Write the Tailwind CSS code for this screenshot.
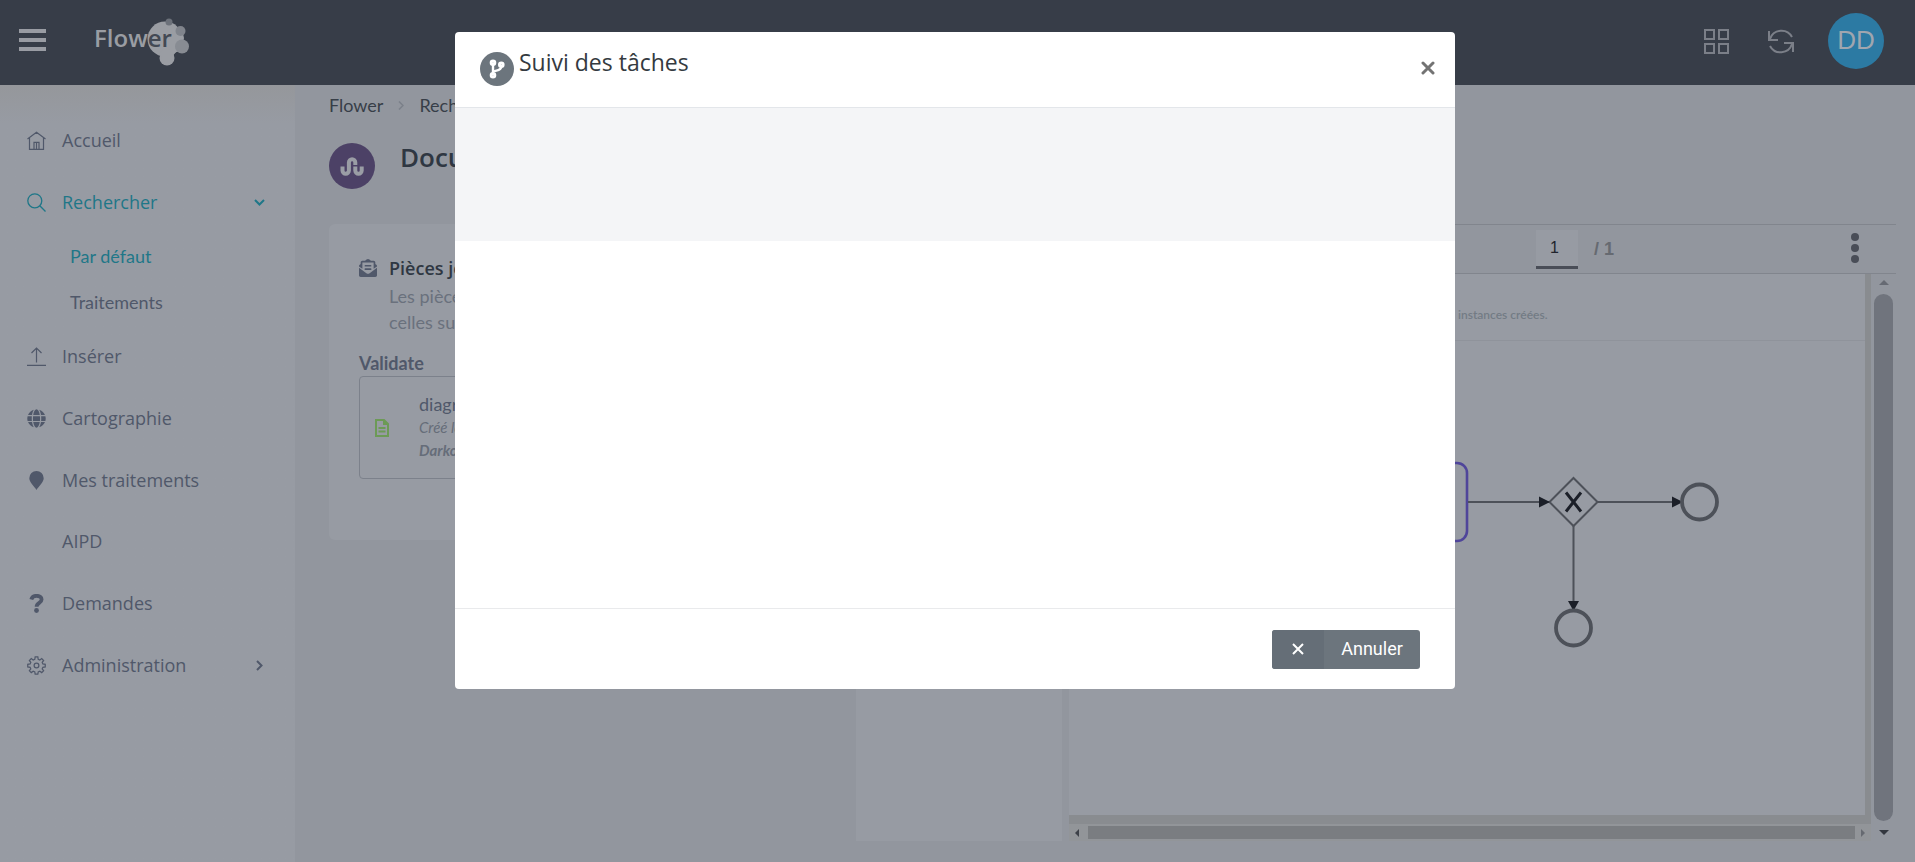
<!DOCTYPE html>
<html lang="fr">
<head>
<meta charset="utf-8">
<meta name="viewport" content="width=device-width, initial-scale=1">
<title>Flower – Suivi des tâches</title>
<script src="https://cdn.jsdelivr.net/npm/@tailwindcss/browser@4"></script>
</head>
<body class="min-h-screen flex flex-col overflow-hidden bg-[#92969e] text-[#50586a] font-['Lato','Noto_Sans',sans-serif]">

<header class="h-[85px] shrink-0 flex items-center bg-[#373d48] pl-[19px] pr-[31px] pb-[3px]">
  <button type="button" aria-label="Menu" class="w-[28px] h-[22px] -mt-[3px] flex flex-col justify-between">
    <span class="block w-[27px] h-[4px] bg-[#999ca3]"></span>
    <span class="block w-[27px] h-[4px] bg-[#999ca3]"></span>
    <span class="block w-[27px] h-[4px] bg-[#999ca3]"></span>
  </button>
  <a href="#" aria-label="Flower" class="ml-[45px]">
    <svg class="w-[100px] h-[50px]" viewBox="0 0 100 50">
      <g fill="#9a9da3">
        <circle cx="73" cy="23" r="17.500"/>
        <circle cx="82" cy="22" r="10"/>
        <circle cx="75" cy="42" r="7.500"/>
        <path d="M66 38 Q70 38 69 44 H82 Q80 38 86 34 L80 26 Z"/>
        <rect x="76" y="12" width="14" height="24" rx="5"/>
      </g>
      <circle cx="77" cy="6" r="3.500" fill="#6c717a"/>
      <circle cx="88.500" cy="15" r="5" fill="#80848c"/>
      <circle cx="90" cy="30.500" r="7" fill="#888c93"/>
      <text x="2" y="31" font-family="Open Sans, sans-serif" font-size="24" font-weight="600" fill="#9a9da3">Flow<tspan fill="#434954">er</tspan></text>
    </svg>
  </a>
  <div class="ml-auto flex items-center">
    <button type="button" aria-label="Applications" class="mr-[37px]">
      <svg class="w-[27px] h-[27px]" viewBox="0 0 27 27" fill="none" stroke="#7b7f88" stroke-width="2"><path d="M2 2h9v9H2zM16 2h9v9h-9zM2 16h9v9H2zM16 16h9v9h-9z"/></svg>
    </button>
    <button type="button" aria-label="Actualiser" class="mr-[33px]">
      <svg class="w-[28px] h-[28px]" viewBox="0 0 28 28" fill="none" stroke="#7b7f88" stroke-width="2"><path d="M2 4v9h9M3 12a12 12 0 0 1 22-2M26 25v-9h-9M25 17a12 12 0 0 1-22 2"/></svg>
    </button>
    <button type="button" class="size-[56px] rounded-full bg-[#2c7aa3] text-[#a0a6af] text-[26px] leading-none pb-[2px] font-['Liberation_Sans',Arial,sans-serif]">DD</button>
  </div>
</header>

<div class="flex flex-1">
  <nav aria-label="Navigation" class="w-[295px] shrink-0 bg-gradient-to-b from-[#95979b] to-[#979ba3] to-5% pt-[24px] text-[18px] font-['Open_Sans','Noto_Sans',sans-serif]">
    <a href="#" class="h-[62px] flex items-center px-[27px] gap-[16px]">
      <svg class="size-[19px] shrink-0" viewBox="0 0 19 19" fill="none" stroke="currentColor" stroke-width="1.200"><path d="M.5 8 9.500 1.200 18.500 8M2.500 7v11.300h14V7M7 18v-6.700h5V18M9.500 11.500v7"/></svg>
      <span>Accueil</span>
    </a>
    <a href="#" class="h-[62px] flex items-center pl-[27px] pr-[30px] gap-[16px] text-[#1f7788]">
      <svg class="size-[19px] shrink-0" viewBox="0 0 19 19" fill="none" stroke="currentColor" stroke-width="1.300"><circle cx="7.800" cy="7.800" r="7"/><path d="m12.800 12.800 5.700 5.700"/></svg>
      <span class="flex-1">Rechercher</span>
      <svg class="w-[11px] h-[7px]" viewBox="0 0 11 7" fill="none" stroke="currentColor" stroke-width="2"><path d="m1 1 4.500 4.500L10 1"/></svg>
    </a>
    <div class="text-[18px] font-['Lato','Noto_Sans',sans-serif]">
      <a href="#" class="h-[46px] flex items-center pl-[70px] text-[#1f7788]">Par défaut</a>
      <a href="#" class="h-[46px] flex items-center pl-[70px]">Traitements</a>
    </div>
    <a href="#" class="h-[62px] flex items-center px-[27px] gap-[16px]">
      <svg class="size-[19px] shrink-0" viewBox="0 0 19 19" fill="none" stroke="currentColor" stroke-width="1.200"><path d="M0 18.400h19M9.500 15.500V1M4.500 6l5-5 5 5"/></svg>
      <span>Insérer</span>
    </a>
    <a href="#" class="h-[62px] flex items-center px-[27px] gap-[16px]">
      <svg class="size-[19px] shrink-0" viewBox="0 0 496 512" fill="currentColor"><path d="M336.500 160C322 70.700 287.800 8 248 8s-74 62.700-88.500 152h177zM152 256c0 22.200 1.200 43.500 3.300 64h185.300c2.100-20.500 3.300-41.800 3.300-64s-1.200-43.500-3.300-64H155.300c-2.100 20.500-3.300 41.800-3.300 64zm324.700-96c-28.600-67.900-86.500-120.400-158-141.600 24.400 33.800 41.200 84.700 50 141.600h108zM177.200 18.400C105.800 39.600 47.800 92.100 19.300 160h108c8.700-56.900 25.500-107.800 49.900-141.600zM487.400 192H372.700c2.100 21 3.300 42.500 3.300 64s-1.200 43-3.300 64h114.600c5.500-20.500 8.600-41.800 8.600-64s-3.100-43.500-8.500-64zM120 256c0-21.500 1.200-43 3.300-64H8.600C3.200 212.500 0 233.800 0 256s3.200 43.500 8.600 64h114.600c-2-21-3.200-42.500-3.200-64zm39.500 96c14.500 89.300 48.700 152 88.500 152s74-62.700 88.500-152h-177zm159.300 141.600c71.400-21.200 129.400-73.700 158-141.600h-108c-8.800 56.900-25.600 107.800-50 141.600zM19.300 352c28.600 67.900 86.500 120.400 158 141.600-24.400-33.800-41.200-84.700-50-141.600h-108z"/></svg>
      <span>Cartographie</span>
    </a>
    <a href="#" class="h-[62px] flex items-center px-[27px] gap-[16px]">
      <svg class="size-[19px] shrink-0" viewBox="0 0 19 19" fill="currentColor"><path d="M9.500 0a7.200 7.200 0 0 0-7.200 7.200c0 4 5 8 7.200 11.800 2.200-3.800 7.200-7.800 7.200-11.800A7.200 7.200 0 0 0 9.500 0z"/></svg>
      <span>Mes traitements</span>
    </a>
    <a href="#" class="h-[61px] flex items-center pl-[62px]">AIPD</a>
    <a href="#" class="h-[62px] flex items-center px-[27px] gap-[16px]">
      <svg class="size-[19px] shrink-0" viewBox="0 0 19 19" fill="none" stroke="currentColor"><path d="M4.300 5.600C5 3 7 1.800 9.600 1.800c3 0 5 1.500 5 3.700 0 3.700-5 3-5 7.200" stroke-width="3.800"/><circle cx="9.500" cy="16.500" r="2.400" fill="currentColor" stroke="none"/></svg>
      <span>Demandes</span>
    </a>
    <a href="#" class="h-[62px] flex items-center pl-[27px] pr-[32px] gap-[16px]">
      <svg class="size-[19px] shrink-0" viewBox="0 0 20 20" fill="none" stroke="currentColor" stroke-width="1.300"><path d="M8.600 1h2.800l.4 2.500 1.700.7 2-1.500 2 2-1.500 2 .7 1.700 2.500.3v2.800l-2.500.4-.7 1.600 1.500 2-2 2-2-1.400-1.700.7-.4 2.400H8.600l-.4-2.400-1.700-.7-2 1.400-2-2 1.500-2-.7-1.600L.8 11.500V8.700l2.500-.3L4 6.700l-1.500-2 2-2 2 1.500 1.700-.7z"/><circle cx="10" cy="10" r="2.500"/></svg>
      <span class="flex-1">Administration</span>
      <svg class="w-[7px] h-[11px]" viewBox="0 0 7 11" fill="none" stroke="currentColor" stroke-width="2"><path d="m1 1 4.500 4.500L1 10"/></svg>
    </a>
  </nav>

  <main class="flex-1 min-w-0 pl-[34px] pr-[19px] pb-[21px] flex flex-col">
    <div class="flex items-center gap-[15px] h-[40px] text-[18px] text-[#373e48]">
      <a href="#">Flower</a>
      <svg class="w-[6px] h-[9px]" viewBox="0 0 6 9" fill="none" stroke="#7b808a" stroke-width="1.500"><path d="m1 .5 4 4-4 4"/></svg>
      <a href="#">Rechercher</a>
    </div>
    <div class="flex gap-[25px] pt-[18px] h-[99px]">
      <span class="size-[46px] rounded-full bg-[#4c4166] flex items-center justify-center">
        <svg class="w-[24px] h-[19px]" viewBox="0 0 24 19" fill="none" stroke="#9a9da5" stroke-width="4"><path d="M2.500 9.500v4a3.200 3.200 0 0 0 6.400 0V5.500a3.200 3.200 0 0 1 6.400 0V8M15.300 9.500v4a3.200 3.200 0 0 0 6.400 0v-4"/></svg>
      </span>
      <h1 class="text-[26px] leading-[28px] font-semibold text-[#2f3742] font-['Open_Sans','Noto_Sans',sans-serif]">Document</h1>
    </div>

    <div class="grid grid-cols-[505fr_1040fr] gap-[22px] flex-1">
      <section class="self-start h-[316px] rounded-md bg-[#979ba3] px-[30px] pt-[30px]">
        <div class="flex gap-[12px]">
          <svg class="w-[18px] h-[18px] mt-[5px] shrink-0" viewBox="0 0 512 512" fill="currentColor"><path d="M176 216h160c8.800 0 16-7.200 16-16v-16c0-8.800-7.200-16-16-16H176c-8.800 0-16 7.200-16 16v16c0 8.800 7.200 16 16 16zm-16 80c0 8.800 7.200 16 16 16h160c8.800 0 16-7.200 16-16v-16c0-8.800-7.200-16-16-16H176c-8.800 0-16 7.200-16 16v16zm96 121.100c-16.400 0-32.800-5.100-46.900-15.200L0 250.900V464c0 26.500 21.500 48 48 48h416c26.500 0 48-21.500 48-48V250.900l-209.100 151c-14.100 10.200-30.500 15.200-46.900 15.200zm237.600-254.200c-8.900-6.900-17.200-13.500-29.600-22.800V96c0-26.500-21.500-48-48-48h-77.600c-3-2.200-5.900-4.300-9-6.600C312.600 29.200 279.200-.400 256 0c-23.200-.400-56.600 29.200-73.400 41.400-3.200 2.300-6 4.400-9 6.600H96c-26.500 0-48 21.500-48 48v44.100c-12.400 9.300-20.800 15.800-29.600 22.800A48 48 0 0 0 0 200.700v10.700l96 69.400V96h320v184.700l96-69.400v-10.700c0-14.700-6.800-28.700-18.400-37.700z"/></svg>
          <div>
            <h2 class="text-[18px] leading-[28px] font-semibold text-[#2f3742] font-['Open_Sans','Noto_Sans',sans-serif]">Pièces  jointes</h2>
            <p class="mt-[1px] text-[18px] leading-[26px] text-[#6a717d]">Les pièces<br>celles sur</p>
          </div>
        </div>
        <h3 class="mt-[16px] text-[18px] leading-[24px] font-bold">Validate</h3>
        <div class="mt-[1px] h-[103px] rounded-sm border border-[#7c818b] flex items-center pl-[15px] gap-[30px]">
          <svg class="w-[14px] h-[18px]" viewBox="0 0 14 18" fill="none" stroke="#6c9a56" stroke-width="2"><path d="M1 1h8l4 4v12H1zM9 1v4h4M3.500 9h7M3.500 12.500h7"/></svg>
          <div class="text-[15px] leading-[23px] text-[#666d79]">
            <p class="text-[18px] text-[#50586a]">diagramme</p>
            <p class="italic">Créé le</p>
            <p class="italic font-bold">Darko</p>
          </div>
        </div>
      </section>

      <section class="flex flex-col min-w-0">
        <div class="h-[50px] shrink-0 border-y border-[#81858d] flex items-center justify-end pr-[37px] font-['Liberation_Sans',Arial,sans-serif]">
          <input type="text" aria-label="Page" value="1" class="w-[42px] h-[39px] bg-[#979ba3] border-b-[3px] border-[#494d57] pl-[14px] text-[16px] text-[#20242d]">
          <span class="ml-[16px] text-[18px] font-bold text-[#666a71]">/ 1</span>
          <button type="button" aria-label="Plus d’options" class="ml-[237px] pb-[3px]">
            <svg class="w-[8px] h-[30px]" viewBox="0 0 8 30" fill="#494d57"><circle cx="4" cy="4" r="4"/><circle cx="4" cy="15" r="4"/><circle cx="4" cy="26" r="4"/></svg>
          </button>
        </div>
        <div class="flex flex-1 gap-[7px]">
          <div class="w-[206px] shrink-0 bg-[#979ba3]"></div>
          <div class="flex-1 flex flex-col min-w-0">
            <div class="flex-1 bg-[#979ba3] border-r-[6px] border-b-[9px] border-[#898c90]">
              <svg class="w-full h-[541px]" viewBox="0 0 796 541" preserveAspectRatio="xMaxYMin meet" fill="none">
                <text x="389" y="45" font-family="Lato, sans-serif" font-size="12" font-weight="600" fill="#737b85">instances créées.</text>
                <path d="M0 66.500h796" stroke="#8f939b"/>
                <rect x="297" y="189" width="101" height="78" rx="10" stroke="#4f459a" stroke-width="2.600"/>
                <path d="M399 228h82M528.500 228h104M504.500 252v94" stroke="#4d5159" stroke-width="2"/>
                <path d="m504.500 204 24 24-24 24-24-24z" stroke="#4d5159" stroke-width="2" fill="#979ba3"/>
                <path d="M470 222.500 481 228l-11 5.500zM603 222.500l11 5.500-11 5.500zM499 327h11l-5.500 10z" fill="#1b1f28"/>
                <path d="m497 218.500 15 19M512 218.500l-15 19" stroke="#1b1f28" stroke-width="3"/>
                <circle cx="630.500" cy="228" r="17.500" stroke="#4d5159" stroke-width="3.800" fill="#979ba3"/>
                <circle cx="504.500" cy="354" r="17.500" stroke="#4d5159" stroke-width="3.800" fill="#979ba3"/>
              </svg>
            </div>
            <div class="h-[17px] flex items-center bg-[#929599] px-[6px] gap-[9px]">
              <svg class="w-[4px] h-[8px]" viewBox="0 0 4 8" fill="#3d4149"><path d="M4 0v8L0 4z"/></svg>
              <span class="flex-1 h-[13px] bg-[#7a7d81]"></span>
              <svg class="w-[4px] h-[8px] -ml-[3px]" viewBox="0 0 4 8" fill="#666a71"><path d="M0 0v8l4-4z"/></svg>
            </div>
          </div>
          <div class="w-[25px] shrink-0 -ml-[7px] flex flex-col items-center py-[6px] gap-[9px]">
            <svg class="w-[10px] h-[5px]" viewBox="0 0 10 5" fill="#666a73"><path d="M0 5h10L5 0z"/></svg>
            <span class="flex-1 w-[19px] rounded-full bg-[#70747d]"></span>
            <svg class="w-[10px] h-[5px]" viewBox="0 0 10 5" fill="#33373f"><path d="M0 0h10L5 5z"/></svg>
          </div>
        </div>
      </section>
    </div>
  </main>
</div>

<div class="fixed inset-0 flex justify-center items-start pt-[32px] pr-[5px]">
  <div role="dialog" aria-modal="true" aria-labelledby="dialog-title" class="w-full max-w-[1000px] rounded-[4px] bg-white overflow-hidden">
    <div class="h-[76px] flex items-start border-b border-[#e3e6ea] pl-[25px] pr-[20px] pt-[15px]">
      <span class="mt-[5px] size-[34px] rounded-full bg-[#6c757d] flex items-center justify-center">
        <svg class="w-[16px] h-[20px]" viewBox="0 0 16 20" fill="none" stroke="#fff" stroke-width="3"><circle cx="4" cy="3.800" r="1.800"/><circle cx="4" cy="16.200" r="1.800"/><circle cx="12.300" cy="5.800" r="1.800"/><path stroke-width="2.400" d="M4 5.500v9M12.300 7.500c0 4-4 3.500-8 5"/></svg>
      </span>
      <h2 id="dialog-title" class="ml-[5px] text-[23px] leading-[31px] font-medium text-[#343a40] font-['Open_Sans','Noto_Sans',sans-serif]">Suivi des tâches</h2>
      <button type="button" aria-label="Fermer" class="ml-auto mt-[14px]">
        <svg class="w-[14px] h-[14px]" viewBox="0 0 14 14" fill="none" stroke="#737373" stroke-width="3" stroke-linecap="round"><path d="m2 2 10 10M12 2 2 12"/></svg>
      </button>
    </div>
    <div class="h-[133px] bg-[#f4f5f7]"></div>
    <div class="h-[367px]"></div>
    <div class="h-[81px] border-t border-[#e9eaec] flex justify-end items-start pt-[21px] pr-[35px]">
      <button type="button" class="h-[39px] w-[148px] flex rounded-[3px] overflow-hidden bg-[#6c757d] text-white text-[18px] font-['Roboto',sans-serif]">
        <span class="w-[52px] h-full bg-[#656e77] flex items-center justify-center pb-[2px]">
          <svg class="w-[12px] h-[12px]" viewBox="0 0 12 12" fill="none" stroke="#fff" stroke-width="2"><path d="m1 1 10 10M11 1 1 11"/></svg>
        </span>
        <span class="flex-1 h-full flex items-center justify-center pb-[2px]">Annuler</span>
      </button>
    </div>
  </div>
</div>
</body>
</html>
